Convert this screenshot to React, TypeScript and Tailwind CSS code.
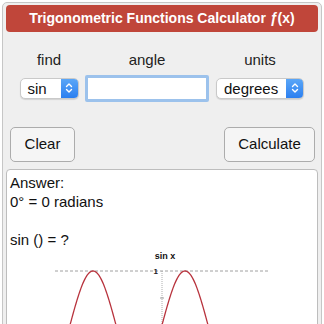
import React from 'react';

const Stepper = () => (
  <span className="flex h-full w-[17px] items-center justify-center rounded-r-[4px] bg-gradient-to-b from-[#5aa6f7] to-[#2b7ff0]">
    <svg width="8" height="12" viewBox="0 0 8 12" fill="none" stroke="white" strokeWidth="1.4" strokeLinecap="round" strokeLinejoin="round">
      <path d="M1.5 4.5 L4 2 L6.5 4.5" />
      <path d="M1.5 7.5 L4 10 L6.5 7.5" />
    </svg>
  </span>
);

const Select = ({ value, width }: { value: string; width: string }) => (
  <div className={`flex h-[21px] ${width} items-center justify-between rounded-[5px] border border-[#c9c9c9] bg-white shadow-[0_1px_1px_rgba(0,0,0,0.12)]`}>
    <span className="pl-[7px] text-[15px] leading-none text-[#111]">{value}</span>
    <Stepper />
  </div>
);

const SineGraph = () => {
  // origin at x=122, y=76 in local coords; period 92px, amplitude 54px; drawn from -2π to π
  const ox = 122;
  const oy = 76;
  const pts: string[] = [];
  for (let x = ox - 92; x <= ox + 46; x += 1) {
    const t = ((x - ox) / 92) * 2 * Math.PI;
    const y = oy - 54 * Math.sin(t);
    if (y <= 82) pts.push(`${x},${y.toFixed(2)}`);
    else pts.push(`${x},82`);
  }
  return (
    <svg width="250" height="80" viewBox="0 0 250 80" className="block">
      <line x1="15" y1="22" x2="230" y2="22" stroke="#888" strokeWidth="0.8" strokeDasharray="3 2" />
      <line x1={ox} y1="22" x2={ox} y2="80" stroke="#999" strokeWidth="0.8" strokeDasharray="1 1" />
      <line x1={ox - 2} y1="49" x2={ox + 2} y2="49" stroke="#888" strokeWidth="0.8" />
      <text x={ox - 4} y="25" fontSize="8" fontWeight="bold" textAnchor="end" fill="#222" fontFamily="Liberation Sans, sans-serif">1</text>
      <polyline points={pts.join(' ')} fill="none" stroke="#b8333d" strokeWidth="1.3" />
      <text x="125" y="10" fontSize="9" fontWeight="bold" textAnchor="middle" fill="#111" fontFamily="Liberation Sans, sans-serif">sin x</text>
    </svg>
  );
};

export default function App() {
  return (
    <div className="h-[324px] w-[324px] overflow-hidden bg-white pl-[2px] pt-[2px] font-['Liberation_Sans',Arial,sans-serif] text-[#222]">
      <div className="h-[340px] w-[320px] rounded-[5px] border border-[#c6c6c6] bg-[#efefef] px-[3px] pt-[2px]">
        <div className="flex h-[27px] items-center justify-center rounded-[4px] bg-[#c0463a] text-[14px] font-bold text-white">
          Trigonometric Functions Calculator&nbsp;<span className="italic">ƒ</span>(x)
        </div>

        <div className="mt-[17px] grid grid-cols-[68px_128px_98px] pl-[9px] text-center text-[15px]">
          <div className="h-[24px]">find</div>
          <div className="h-[24px]">angle</div>
          <div className="h-[24px]">units</div>
          <div className="flex h-[30px] items-center justify-center">
            <Select value="sin" width="w-[59px]" />
          </div>
          <div className="flex h-[30px] items-center justify-center">
            <div className="h-[27px] w-[124px] rounded-[2px] border-[3px] border-[#9cc2ec] bg-white" />
          </div>
          <div className="flex h-[30px] items-center justify-center">
            <Select value="degrees" width="w-[88px]" />
          </div>
        </div>

        <div className="mt-[24px] flex justify-between pl-[4px] pr-[3px]">
          <button className="h-[35px] w-[65px] rounded-[5px] border border-[#acacac] bg-[#f5f5f5] text-[15px] text-[#111]">Clear</button>
          <button className="h-[35px] w-[91px] rounded-[5px] border border-[#acacac] bg-[#f5f5f5] text-[15px] text-[#111]">Calculate</button>
        </div>

        <div className="mt-[7px] h-[170px] rounded-[4px] border border-[#bdbdbd] bg-white pl-[3px] pt-[3px] text-[15px] leading-[19px] text-[#111]">
          <div>Answer:</div>
          <div>0° = 0 radians</div>
          <div>&nbsp;</div>
          <div>sin () = ?</div>
          <div className="mt-0 pl-[30px]">
            <SineGraph />
          </div>
        </div>
      </div>
    </div>
  );
}
